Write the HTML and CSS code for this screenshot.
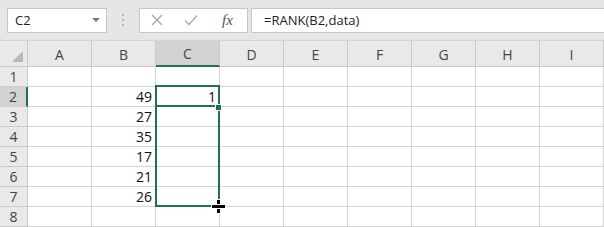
FILE: index.html
```
<!DOCTYPE html>
<html lang="en">
<head>
   <meta charset="UTF-8">
   <link rel="stylesheet" href="styles.css">
</head>
<body>
   <div class="formula-bar">
      <div class="name-box">
         <span>C2</span>
         <span class="drop"></span>
      </div>
      <div class="grip">
         <i></i><i></i><i></i>
      </div>
      <div class="fx-box">
         <svg class="ico" width="12" height="12" viewBox="0 0 12 12">
            <path d="M1 1 L11 11 M11 1 L1 11" stroke="#a6a6a6" stroke-width="1.3" fill="none"/>
         </svg>
         <svg class="ico" width="14" height="12" viewBox="0 0 14 12">
            <path d="M1 6.5 L5 10.5 L13 1.5" stroke="#a6a6a6" stroke-width="1.3" fill="none"/>
         </svg>
         <span class="fx">fx</span>
      </div>
      <div class="formula">=RANK(B2,data)</div>
   </div>

   <div class="sheet">
      <div class="corner"><span class="tri"></span></div>
      <div class="col-head">A</div>
      <div class="col-head">B</div>
      <div class="col-head selected">C</div>
      <div class="col-head">D</div>
      <div class="col-head">E</div>
      <div class="col-head">F</div>
      <div class="col-head">G</div>
      <div class="col-head">H</div>
      <div class="col-head">I</div>
   </div>

   <div class="cursor"></div>

   <script>
      var sheet = document.querySelector(".sheet");
      var colB = ["", "49", "27", "35", "17", "21", "26", ""];
      var colC = ["", "1", "", "", "", "", "", ""];

      for (var r = 0; r < 8; r++) {
         var head = document.createElement("div");
         head.className = "row-head" + (r == 1 ? " selected" : "");
         head.innerText = r + 1;
         sheet.appendChild(head);
         for (var c = 0; c < 9; c++) {
            var cell = document.createElement("div");
            cell.className = "cell";
            if (c == 1) cell.innerText = colB[r];
            if (c == 2) cell.innerText = colC[r];
            sheet.appendChild(cell);
         }
      }

      var sel = document.createElement("div");
      sel.className = "selection";
      sel.innerHTML = '<div class="active-line"></div><div class="handle"></div>';
      sheet.appendChild(sel);
   </script>
</body>
</html>
```

FILE: styles.css
```
body {
   margin: 0;
   width: 604px;
   height: 227px;
   overflow: hidden;
   background-color: #e6e6e6;
   font-family: "Open Sans", "Noto Sans", sans-serif;
}
.formula-bar {
   display: flex;
   align-items: center;
   height: 40px;
   padding-left: 7px;
   box-sizing: border-box;
   background-color: #e6e6e6;
}
.name-box {
   display: flex;
   align-items: center;
   justify-content: space-between;
   width: 100px;
   height: 25px;
   padding: 0 6px 0 7px;
   box-sizing: border-box;
   background-color: #fff;
   border: 1px solid #c6c6c6;
   font-size: 13px;
   color: #222;
}
.drop {
   width: 0;
   height: 0;
   border-left: 4px solid transparent;
   border-right: 4px solid transparent;
   border-top: 4px solid #777;
}
.grip {
   display: flex;
   flex-direction: column;
   gap: 3px;
   width: 32px;
   align-items: center;
}
.grip i {
   display: block;
   width: 2px;
   height: 2px;
   background-color: #b4b4b4;
}
.fx-box {
   display: flex;
   align-items: center;
   width: 109px;
   height: 25px;
   box-sizing: border-box;
   background-color: #fff;
   border: 1px solid #c6c6c6;
   padding-left: 11px;
}
.ico {
   margin-right: 21px;
}
.fx {
   font-family: "Liberation Serif", serif;
   font-style: italic;
   font-size: 15px;
   color: #555;
   margin-left: 3px;
}
.formula {
   flex: 1;
   height: 25px;
   margin-left: 3px;
   padding-left: 12px;
   box-sizing: border-box;
   background-color: #fff;
   border: 1px solid #c6c6c6;
   border-right: none;
   font-size: 13px;
   line-height: 23px;
   color: #222;
}
.sheet {
   position: relative;
   display: grid;
   grid-template-columns: 28px repeat(9, 64px);
   grid-template-rows: 27px repeat(8, 20px);
   background-color: #fff;
}
.corner, .col-head, .row-head {
   background-color: #e9e9e9;
   color: #444;
   font-size: 14px;
   box-sizing: border-box;
   border-right: 1px solid #cacaca;
   border-bottom: 1px solid #cacaca;
   display: flex;
   align-items: center;
   justify-content: center;
}
.col-head {
   align-items: flex-end;
   padding-bottom: 2px;
   border-top: 1px solid #d4d4d4;
}
.corner {
   position: relative;
   border-top: 1px solid #d4d4d4;
}
.tri {
   position: absolute;
   right: 4px;
   bottom: 4px;
   width: 11px;
   height: 11px;
   background-color: #b9b9b9;
   clip-path: polygon(100% 0, 100% 100%, 0 100%);
}
.col-head.selected {
   background-color: #d3d3d3;
   border-bottom: 2px solid #217346;
}
.row-head.selected {
   background-color: #d3d3d3;
   border-right: 2px solid #217346;
}
.cell {
   box-sizing: border-box;
   border-right: 1px solid #d4d4d4;
   border-bottom: 1px solid #d4d4d4;
   text-align: right;
   padding-right: 3px;
   font-size: 14px;
   line-height: 19px;
   color: #111;
}
.selection {
   position: absolute;
   left: 155px;
   top: 45px;
   width: 65px;
   height: 122px;
   box-sizing: border-box;
   border: 2px solid #217346;
}
.active-line {
   height: 2px;
   margin-top: 18px;
   background-color: #217346;
}
.handle {
   position: absolute;
   right: -4px;
   top: 17px;
   width: 5px;
   height: 5px;
   background-color: #217346;
   border: 1px solid #fff;
}
.cursor {
   position: absolute;
   left: 212px;
   top: 200px;
   width: 13px;
   height: 13px;
}
.cursor::before, .cursor::after {
   content: "";
   position: absolute;
   background-color: #000;
   outline: 1px solid #fff;
}
.cursor::before {
   left: 5px;
   top: 0;
   width: 3px;
   height: 13px;
}
.cursor::after {
   left: 0;
   top: 5px;
   width: 13px;
   height: 3px;
}
```
